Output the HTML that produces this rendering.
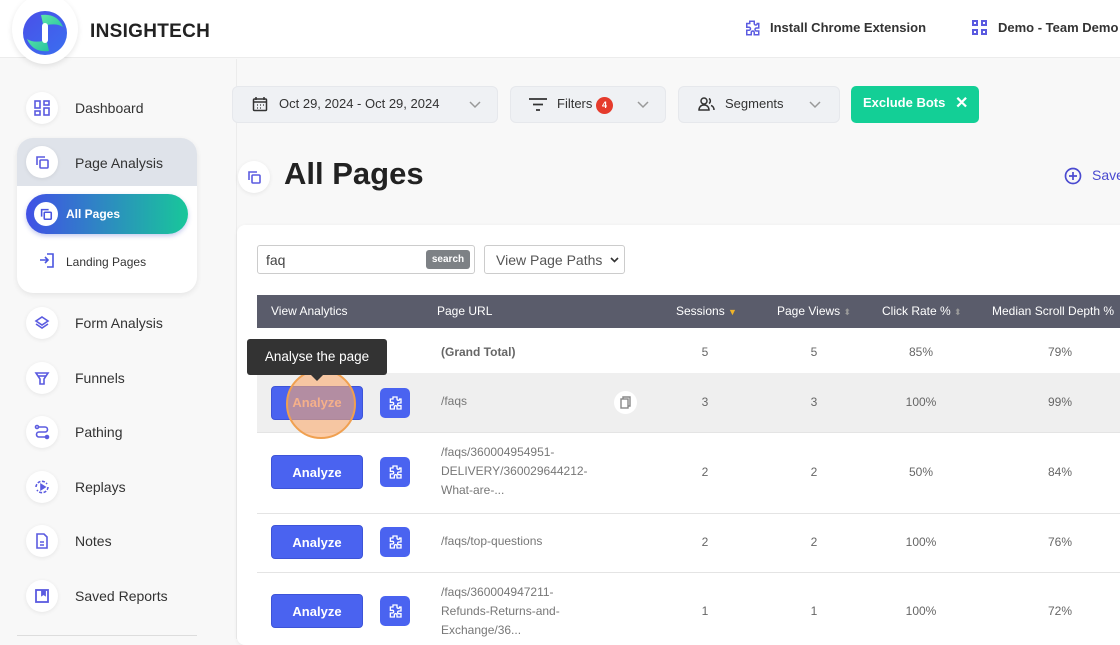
<!DOCTYPE html>
<html><head><meta charset="utf-8"><style>
*{box-sizing:border-box;margin:0;padding:0}
body{width:1120px;height:639px;overflow:hidden;background:#f8f8f8;font-family:"Liberation Sans",sans-serif;color:#222;position:relative}
.a{position:absolute}
.ic{position:absolute;width:32px;height:32px;border-radius:50%;background:#fff;box-shadow:0 1px 4px rgba(0,0,0,.08)}
.ic svg{position:absolute;left:8px;top:8px}
.nav{position:absolute;left:75px;font-size:14px;color:#333}
.pill{position:absolute;top:86px;height:37px;background:#eff1f4;border-radius:6px;border:1px solid #e6e8ec;font-size:13px;color:#333}
.th{position:absolute;top:304px;font-size:12px;color:#fff}
.td{position:absolute;font-size:12px;color:#666;text-align:center;width:80px}
.btn{position:absolute;left:271px;width:92px;height:34px;background:#4a63f0;border-radius:4px;color:#fff;font-weight:bold;font-size:13px;text-align:center;line-height:34px;border:1px solid #3d54d8}
.pz{position:absolute;left:380px;width:30px;height:30px;background:#4a63f0;border-radius:5px}
.pz svg{position:absolute;left:7px;top:7px}
.url{position:absolute;left:441px;font-size:12px;color:#777;line-height:19px}
</style></head><body>
<div class="a" style="left:0;top:0;width:1120px;height:58px;background:#fff;border-bottom:1px solid #ececec"></div>
<div class="a" style="left:12px;top:-6px;width:66px;height:70px;border-radius:50%;background:#fff;box-shadow:0 2px 6px rgba(0,0,0,.1)"></div>
<svg class="a" style="left:23px;top:11px" width="44" height="44" viewBox="0 0 44 44"><defs><linearGradient id="g" x1="0" y1="0" x2="1" y2="1"><stop offset="0" stop-color="#4a4fe8"/><stop offset="1" stop-color="#3a6ff0"/></linearGradient><linearGradient id="h" x1="0" y1="0" x2="1" y2="1"><stop offset="0" stop-color="#5ee6a8"/><stop offset="1" stop-color="#25c2a0"/></linearGradient></defs><circle cx="22" cy="22" r="22" fill="url(#g)"/><path d="M18 4 Q34 2 40 16 Q34 12 24 14 L22 22Z" fill="url(#h)"/><path d="M26 40 Q10 42 4 28 Q10 32 20 30 L22 22Z" fill="url(#h)"/><rect x="19" y="12" width="6" height="20" rx="3" fill="#fff"/></svg>
<div class="a" style="left:90px;top:21px;font-size:19px;font-weight:bold;letter-spacing:.3px;color:#222">INSIGHTECH</div>
<svg class="a" style="left:743px;top:19px" width="18" height="18" viewBox="0 0 24 24" fill="none" stroke="#5b5be0" stroke-width="2"><path d="M9 3h6v3a2 2 0 1 0 4 0h2v6h-3a2 2 0 1 0 0 4h3v5h-6v-3a2 2 0 1 0-4 0v3H5v-6h3a2 2 0 1 0 0-4H5V6h4z"/></svg>
<div class="a" style="left:770px;top:20px;font-size:13px;font-weight:bold;color:#333">Install Chrome Extension</div>
<svg class="a" style="left:972px;top:20px" width="16" height="16" viewBox="0 0 16 16" fill="#5b5be0"><rect x="0" y="0" width="6" height="6"/><rect x="9" y="0" width="6" height="6"/><rect x="0" y="9" width="6" height="6"/><rect x="9" y="9" width="6" height="6"/><rect x="2" y="2" width="2" height="2" fill="#fff"/><rect x="11" y="2" width="2" height="2" fill="#fff"/><rect x="2" y="11" width="2" height="2" fill="#fff"/><rect x="11" y="11" width="2" height="2" fill="#fff"/></svg>
<div class="a" style="left:998px;top:20px;font-size:13px;font-weight:bold;color:#333;white-space:nowrap">Demo - Team Demo I</div>

<div class="a" style="left:236px;top:59px;width:1px;height:580px;background:#ececec"></div>
<div class="ic" style="left:26px;top:92px"><svg width="16" height="16" viewBox="0 0 16 16" fill="none" stroke="#5b5be0" stroke-width="1.6"><rect x="1" y="1" width="5" height="7"/><rect x="10" y="1" width="5" height="4"/><rect x="1" y="11" width="5" height="4"/><rect x="10" y="8" width="5" height="7"/></svg></div>
<div class="nav" style="top:100px">Dashboard</div>
<div class="a" style="left:17px;top:138px;width:180px;height:155px;border-radius:16px;background:#fff;box-shadow:0 2px 6px rgba(0,0,0,.08);overflow:hidden"><div style="height:48px;background:#dfe3ea"></div></div>
<div class="ic" style="left:26px;top:146px"><svg width="16" height="16" viewBox="0 0 16 16" fill="none" stroke="#5b5be0" stroke-width="1.6"><path d="M3 11V3h8"/><rect x="6" y="6" width="8" height="8" rx="1"/></svg></div>
<div class="nav" style="top:155px">Page Analysis</div>
<div class="a" style="left:26px;top:194px;width:162px;height:40px;border-radius:20px;background:linear-gradient(90deg,#4150e6,#18c79a);box-shadow:0 2px 5px rgba(60,80,200,.3)"></div>
<div class="a" style="left:34px;top:202px;width:24px;height:24px;border-radius:50%;background:#fff"></div>
<svg class="a" style="left:39px;top:207px" width="14" height="14" viewBox="0 0 16 16" fill="none" stroke="#4a55e0" stroke-width="1.8"><path d="M3 11V3h8"/><rect x="6" y="6" width="8" height="8" rx="1"/></svg>
<div class="a" style="left:66px;top:207px;font-size:12px;font-weight:bold;color:#fff">All Pages</div>
<svg class="a" style="left:39px;top:252px" width="16" height="16" viewBox="0 0 16 16" fill="none" stroke="#4a55e0" stroke-width="1.6"><path d="M8 2h6v13H8"/><path d="M1 8h8M6 5l3 3-3 3"/></svg>
<div class="a" style="left:66px;top:255px;font-size:12px;color:#333">Landing Pages</div>
<div class="ic" style="left:26px;top:307px"><svg width="16" height="16" viewBox="0 0 16 16" fill="none" stroke="#5b5be0" stroke-width="1.6"><path d="M8 2l6 4-6 4-6-4z"/><path d="M2 9l6 4 6-4"/></svg></div>
<div class="nav" style="top:315px">Form Analysis</div>
<div class="ic" style="left:26px;top:362px"><svg width="16" height="16" viewBox="0 0 16 16" fill="none" stroke="#5b5be0" stroke-width="1.6"><path d="M2 3h12l-4 6v5H6V9z"/><path d="M4 6h8"/></svg></div>
<div class="nav" style="top:370px">Funnels</div>
<div class="ic" style="left:26px;top:416px"><svg width="16" height="16" viewBox="0 0 16 16" fill="none" stroke="#5b5be0" stroke-width="1.6"><circle cx="3" cy="3" r="1.5"/><circle cx="13" cy="13" r="1.5" fill="#5b5be0"/><path d="M5 3h6a2.5 2.5 0 0 1 0 5H5a2.5 2.5 0 0 0 0 5h6"/></svg></div>
<div class="nav" style="top:424px">Pathing</div>
<div class="ic" style="left:26px;top:471px"><svg width="16" height="16" viewBox="0 0 16 16" fill="none" stroke="#5b5be0" stroke-width="1.6"><path d="M2 8a6 6 0 0 1 11-3M14 8a6 6 0 0 1-11 3" stroke-dasharray="3 1.5"/><path d="M7 5.5v5l4-2.5z" fill="#5b5be0"/></svg></div>
<div class="nav" style="top:479px">Replays</div>
<div class="ic" style="left:26px;top:525px"><svg width="16" height="16" viewBox="0 0 16 16" fill="none" stroke="#5b5be0" stroke-width="1.6"><path d="M3 1h7l3 3v11H3z"/><path d="M6 9h4M6 12h4"/></svg></div>
<div class="nav" style="top:533px">Notes</div>
<div class="ic" style="left:26px;top:580px"><svg width="16" height="16" viewBox="0 0 16 16" fill="none" stroke="#5b5be0" stroke-width="1.8"><rect x="2" y="2" width="12" height="12"/><path d="M8 2v5l1.5-1 1.5 1V2" fill="#5b5be0"/></svg></div>
<div class="nav" style="top:588px">Saved Reports</div>
<div class="a" style="left:17px;top:635px;width:180px;height:1px;background:#ddd"></div>

<div class="pill" style="left:232px;width:266px"><svg class="a" style="left:19px;top:9px" width="16" height="16" viewBox="0 0 16 16" fill="none" stroke="#333" stroke-width="1.5"><rect x="1.5" y="3" width="13" height="11.5" rx="1"/><path d="M4 1v3M12 1v3M1.5 6h13"/><path d="M5 9h1M8 9h1M11 9h1M5 12h1M8 12h1" stroke-width="1.3"/></svg><span class="a" style="left:46px;top:9px">Oct 29, 2024 - Oct 29, 2024</span><svg class="a" style="left:236px;top:14px" width="12" height="8" viewBox="0 0 12 8" fill="none" stroke="#999" stroke-width="1.5"><path d="M1 1l5 5 5-5"/></svg></div>
<div class="pill" style="left:510px;width:156px"><svg class="a" style="left:18px;top:11px" width="18" height="13" viewBox="0 0 18 13" stroke="#333" stroke-width="1.8"><path d="M0 1h18M4 6.5h10M7 12h4"/></svg><span class="a" style="left:46px;top:9px">Filters</span><span class="a" style="left:85px;top:10px;width:17px;height:17px;border-radius:50%;background:#e53b2c;color:#fff;font-size:9px;font-weight:bold;text-align:center;line-height:17px">4</span><svg class="a" style="left:126px;top:14px" width="12" height="8" viewBox="0 0 12 8" fill="none" stroke="#999" stroke-width="1.5"><path d="M1 1l5 5 5-5"/></svg></div>
<div class="pill" style="left:678px;width:162px"><svg class="a" style="left:19px;top:10px" width="17" height="15" viewBox="0 0 17 15" fill="none" stroke="#333" stroke-width="1.5"><circle cx="6" cy="4" r="3"/><path d="M1 13c0-3 2-5 5-5s5 2 5 5zM11 1.5a3 3 0 0 1 0 5M13 8.5c2 .5 3 2.5 3 4.5"/></svg><span class="a" style="left:46px;top:9px">Segments</span><svg class="a" style="left:130px;top:14px" width="12" height="8" viewBox="0 0 12 8" fill="none" stroke="#999" stroke-width="1.5"><path d="M1 1l5 5 5-5"/></svg></div>
<div class="a" style="left:851px;top:86px;width:128px;height:37px;background:#13cf96;border-radius:5px;color:#fff;font-weight:bold;font-size:13px"><span class="a" style="left:12px;top:9px">Exclude Bots</span><span class="a" style="left:104px;top:7px;font-size:16px">✕</span></div>

<div class="ic" style="left:238px;top:161px"><svg width="16" height="16" viewBox="0 0 16 16" fill="none" stroke="#5b5be0" stroke-width="1.6"><path d="M3 11V3h8"/><rect x="6" y="6" width="8" height="8" rx="1"/></svg></div>
<div class="a" style="left:284px;top:156px;font-size:31px;font-weight:bold;color:#222">All Pages</div>
<svg class="a" style="left:1064px;top:167px" width="18" height="18" viewBox="0 0 18 18" fill="none" stroke="#4a4ad0" stroke-width="1.7"><circle cx="9" cy="9" r="7.5"/><path d="M9 5v8M5 9h8"/></svg>
<div class="a" style="left:1092px;top:167px;font-size:14px;color:#4a4ad0">Save</div>

<div class="a" style="left:237px;top:225px;width:900px;height:420px;background:#fff;border-radius:8px;box-shadow:0 1px 4px rgba(0,0,0,.06)"></div>
<div class="a" style="left:257px;top:245px;width:218px;height:29px;border:1px solid #ccc;border-radius:3px;background:#fff"><span class="a" style="left:8px;top:6px;font-size:14px;color:#444">faq</span><span class="a" style="left:168px;top:4px;width:44px;height:19px;background:#7d8185;border-radius:3px;color:#fff;font-size:10px;font-weight:bold;text-align:center;line-height:19px">search</span></div>
<div class="a" style="left:484px;top:245px;width:141px;height:29px;border:1px solid #ccc;border-radius:3px;background:#fff"><span class="a" style="left:11px;top:6px;font-size:14px;color:#555">View Page Paths</span><svg class="a" style="left:125px;top:11px" width="9" height="6" viewBox="0 0 9 6" fill="none" stroke="#333" stroke-width="1.6"><path d="M1 1l3.5 3.5L8 1"/></svg></div>

<div class="a" style="left:257px;top:295px;width:863px;height:33px;background:#5a5c6b"></div>
<div class="th" style="left:271px">View Analytics</div>
<div class="th" style="left:437px">Page URL</div>
<div class="th" style="left:676px">Sessions <span style="color:#f0b429;font-size:9px">▼</span></div>
<div class="th" style="left:777px">Page Views <span style="color:#999;font-size:9px">⬍</span></div>
<div class="th" style="left:882px">Click Rate % <span style="color:#999;font-size:9px">⬍</span></div>
<div class="th" style="left:992px;white-space:nowrap">Median Scroll Depth %</div>

<div class="a" style="left:257px;top:373px;width:863px;height:59px;background:#efefef"></div>
<div class="a" style="left:257px;top:432px;width:863px;height:1px;background:#e4e4e4"></div>
<div class="a" style="left:257px;top:513px;width:863px;height:1px;background:#e4e4e4"></div>
<div class="a" style="left:257px;top:572px;width:863px;height:1px;background:#e4e4e4"></div>

<div class="url" style="left:441px;top:343px;font-weight:bold;color:#666">(Grand Total)</div>
<div class="td" style="left:665px;top:345px">5</div><div class="td" style="left:774px;top:345px">5</div><div class="td" style="left:881px;top:345px">85%</div><div class="td" style="left:1020px;top:345px">79%</div>

<div class="btn" style="top:386px;color:transparent">Analyze</div>
<div class="pz" style="top:388px"><svg width="16" height="16" viewBox="0 0 24 24" fill="none" stroke="#fff" stroke-width="2"><path d="M9 3h6v3a2 2 0 1 0 4 0h2v6h-3a2 2 0 1 0 0 4h3v5h-6v-3a2 2 0 1 0-4 0v3H5v-6h3a2 2 0 1 0 0-4H5V6h4z"/></svg></div>
<div class="url" style="top:392px">/faqs</div>
<div class="a" style="left:614px;top:391px;width:23px;height:23px;border-radius:50%;background:#fff"><svg class="a" style="left:6px;top:5px" width="11" height="13" viewBox="0 0 11 13" fill="none" stroke="#888" stroke-width="1.4"><path d="M3 3V1h7v9H8"/><rect x="1" y="3" width="7" height="9"/></svg></div>
<div class="td" style="left:665px;top:395px">3</div><div class="td" style="left:774px;top:395px">3</div><div class="td" style="left:881px;top:395px">100%</div><div class="td" style="left:1020px;top:395px">99%</div>
<div class="a" style="left:286px;top:369px;width:70px;height:70px;border-radius:50%;background:rgba(250,170,110,.6);border:2px solid #f0a050"></div>
<div class="a" style="left:271px;top:395px;width:92px;text-align:center;font-size:13px;font-weight:bold;color:#f5b08a">Analyze</div>
<div class="a" style="left:247px;top:339px;width:140px;height:36px;background:#333;border-radius:3px;color:#fff;font-size:13.5px;line-height:36px;text-align:center">Analyse the page</div>
<div class="a" style="left:311px;top:375px;width:0;height:0;border-left:6px solid transparent;border-right:6px solid transparent;border-top:6px solid #333"></div>

<div class="btn" style="top:455px">Analyze</div>
<div class="pz" style="top:457px"><svg width="16" height="16" viewBox="0 0 24 24" fill="none" stroke="#fff" stroke-width="2"><path d="M9 3h6v3a2 2 0 1 0 4 0h2v6h-3a2 2 0 1 0 0 4h3v5h-6v-3a2 2 0 1 0-4 0v3H5v-6h3a2 2 0 1 0 0-4H5V6h4z"/></svg></div>
<div class="url" style="top:443px">/faqs/360004954951-<br>DELIVERY/360029644212-<br>What-are-...</div>
<div class="td" style="left:665px;top:465px">2</div><div class="td" style="left:774px;top:465px">2</div><div class="td" style="left:881px;top:465px">50%</div><div class="td" style="left:1020px;top:465px">84%</div>

<div class="btn" style="top:525px">Analyze</div>
<div class="pz" style="top:527px"><svg width="16" height="16" viewBox="0 0 24 24" fill="none" stroke="#fff" stroke-width="2"><path d="M9 3h6v3a2 2 0 1 0 4 0h2v6h-3a2 2 0 1 0 0 4h3v5h-6v-3a2 2 0 1 0-4 0v3H5v-6h3a2 2 0 1 0 0-4H5V6h4z"/></svg></div>
<div class="url" style="top:532px">/faqs/top-questions</div>
<div class="td" style="left:665px;top:535px">2</div><div class="td" style="left:774px;top:535px">2</div><div class="td" style="left:881px;top:535px">100%</div><div class="td" style="left:1020px;top:535px">76%</div>

<div class="btn" style="top:594px">Analyze</div>
<div class="pz" style="top:596px"><svg width="16" height="16" viewBox="0 0 24 24" fill="none" stroke="#fff" stroke-width="2"><path d="M9 3h6v3a2 2 0 1 0 4 0h2v6h-3a2 2 0 1 0 0 4h3v5h-6v-3a2 2 0 1 0-4 0v3H5v-6h3a2 2 0 1 0 0-4H5V6h4z"/></svg></div>
<div class="url" style="top:583px">/faqs/360004947211-<br>Refunds-Returns-and-<br>Exchange/36...</div>
<div class="td" style="left:665px;top:604px">1</div><div class="td" style="left:774px;top:604px">1</div><div class="td" style="left:881px;top:604px">100%</div><div class="td" style="left:1020px;top:604px">72%</div>
</body></html>
